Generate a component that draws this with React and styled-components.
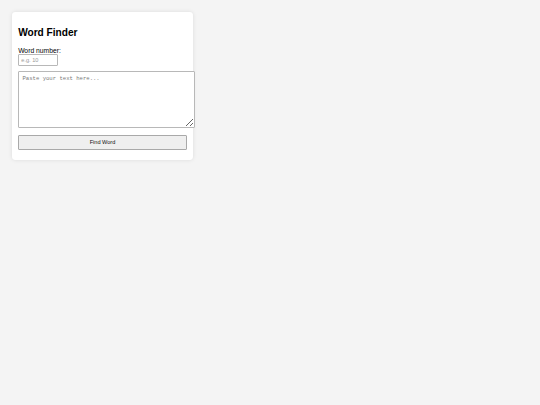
import React from "react";
import styled, { createGlobalStyle } from "styled-components";

const GlobalStyle = createGlobalStyle`
  html, body {
    margin: 0;
    background: #f4f4f4;
    font-family: "Liberation Sans", Arial, sans-serif;
  }
`;

const Page = styled.div`
  padding: 11.8px;
  min-height: 405px;
  box-sizing: border-box;
`;

const Card = styled.div`
  width: 168.75px;
  padding: 6.33px 6.33px 10px;
  background: #fff;
  border-radius: 3.4px;
  box-shadow: 0 0 4px rgba(0, 0, 0, 0.1);
`;

const Title = styled.h2`
  font-size: 10.125px;
  line-height: 11.6px;
  font-weight: bold;
  margin: 8.4px 0;
  color: #000;
`;

const Label = styled.label`
  display: block;
  font-size: 6.75px;
  line-height: 7.8px;
  color: #000;
`;

const NumberInput = styled.input`
  display: block;
  box-sizing: border-box;
  width: 40px;
  height: 12px;
  margin: 0 0 4.3px;
  padding: 0 2.2px;
  border: 1px solid #b8b8b8;
  border-radius: 1px;
  font-family: "Liberation Sans", Arial, sans-serif;
  font-size: 5.6px;
  outline: none;

  &::placeholder {
    font-family: "Liberation Sans", Arial, sans-serif;
    color: #999;
  }
`;

const TextArea = styled.textarea`
  display: block;
  box-sizing: border-box;
  width: 177px;
  height: 57.5px;
  margin: 0 0 6.7px;
  padding: 3.4px;
  border: 1px solid #b8b8b8;
  border-radius: 1px;
  font-family: "Liberation Mono", "Courier New", monospace;
  font-size: 5.6px;
  outline: none;

  &::placeholder {
    color: #7a7a7a;
  }
`;

const Button = styled.button`
  display: block;
  box-sizing: border-box;
  width: 168.75px;
  height: 15px;
  padding: 0;
  background: #efefef;
  border: 1px solid #a9a9a9;
  border-radius: 1px;
  font-family: "Liberation Sans", Arial, sans-serif;
  font-size: 5.6px;
  font-weight: normal;
  color: #111;
  cursor: pointer;
`;

export default function App() {
  return (
    <Page>
      <GlobalStyle />
      <Card>
        <Title>Word Finder</Title>
        <Label htmlFor="word-number">Word number:</Label>
        <NumberInput id="word-number" type="text" placeholder="e.g. 10" />
        <TextArea placeholder="Paste your text here..." />
        <Button>Find Word</Button>
      </Card>
    </Page>
  );
}
